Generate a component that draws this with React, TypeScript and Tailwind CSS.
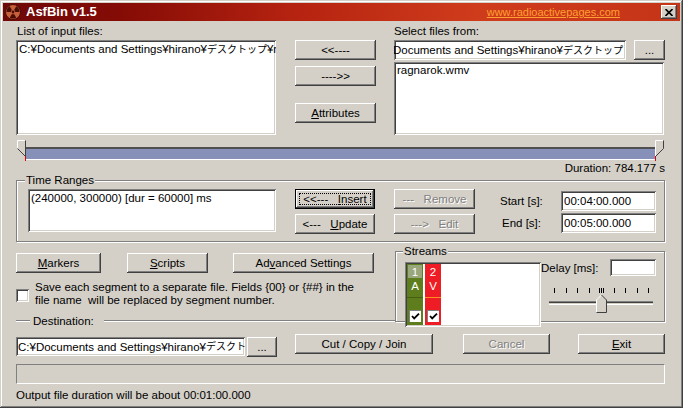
import type { ReactNode } from 'react'

const font = "font-['Liberation_Sans','Noto_Sans_CJK_JP',sans-serif]"
const raised =
  'bg-[#d4d0c8] shadow-[inset_-1px_-1px_#404040,inset_1px_1px_#ffffff,inset_-2px_-2px_#808080,inset_2px_2px_#d4d0c8]'
const sunken =
  'bg-white shadow-[inset_1px_1px_#808080,inset_-1px_-1px_#ffffff,inset_2px_2px_#404040,inset_-2px_-2px_#d4d0c8]'
const etched = 'border border-[#808080] shadow-[inset_1px_1px_#ffffff,1px_1px_#ffffff]'
const disabledText = 'text-[#808080] [text-shadow:1px_1px_0_#ffffff]'

function Btn({
  children,
  className = '',
  disabled = false,
}: {
  children: ReactNode
  className?: string
  disabled?: boolean
}) {
  return (
    <button
      type="button"
      className={`${raised} flex h-[20px] items-center justify-center whitespace-pre ${
        disabled ? disabledText : 'text-black'
      } ${className}`}
    >
      {children}
    </button>
  )
}

function J({ children }: { children: ReactNode }) {
  return <span className="text-[10px]">{children}</span>
}

function CheckMark() {
  return (
    <svg width="9" height="9" viewBox="0 0 9 9">
      <polyline points="1,4 3.2,6.4 8,1.6" fill="none" stroke="#000" strokeWidth="1.8" />
    </svg>
  )
}

function CheckBox({ checked = false, className = '' }: { checked?: boolean; className?: string }) {
  return (
    <div className={`${sunken} flex h-[13px] w-[13px] shrink-0 items-center justify-center ${className}`}>
      {checked && <CheckMark />}
    </div>
  )
}

function RadIcon() {
  return (
    <svg width="16" height="16" viewBox="0 0 16 16">
      <circle cx="8" cy="8" r="7.5" fill="#c8603a" stroke="#4a0e06" />
      <g fill="#4a0e06">
        <path d="M9.1 9.9 L11.25 13.63 A6.5 6.5 0 0 1 4.75 13.63 L6.9 9.9 A2.2 2.2 0 0 0 9.1 9.9 Z" />
        <path d="M5.8 8 L1.5 8 A6.5 6.5 0 0 1 4.75 2.37 L6.9 6.1 A2.2 2.2 0 0 0 5.8 8 Z" />
        <path d="M9.1 6.1 L11.25 2.37 A6.5 6.5 0 0 1 14.5 8 L10.2 8 A2.2 2.2 0 0 0 9.1 6.1 Z" />
        <circle cx="8" cy="8" r="1.4" />
      </g>
    </svg>
  )
}

function TitleBar() {
  return (
    <div className="flex h-[18px] items-center bg-[linear-gradient(90deg,#6e0808_0%,#860c06_18%,#b42210_42%,#cf3c1c_70%,#c63418_100%)] pl-[2px] pr-[3px]">
      <RadIcon />
      <span className="ml-[5px] text-[13px] font-bold leading-[16px] text-white">AsfBin v1.5</span>
      <span className="ml-auto mr-[41px] text-[11px] leading-[14px] text-[#ffa030] underline">
        www.radioactivepages.com
      </span>
      <div className={`${raised} flex h-[14px] w-[16px] items-center justify-center`}>
        <svg width="8" height="7" viewBox="0 0 8 7">
          <path d="M0.5 0 L7.5 7 M7.5 0 L0.5 7" stroke="#000" strokeWidth="1.6" />
        </svg>
      </div>
    </div>
  )
}

function Thumb({ side }: { side: 'left' | 'right' }) {
  if (side === 'left') {
    return (
      <svg width="10" height="21" viewBox="0 0 10 21" className="shrink-0">
        <path d="M1.5 0.5 H9.5 V16.5 L1.5 8.5 Z" fill="#d4d0c8" />
        <path d="M1.5 8.5 V0.5 H9" stroke="#ffffff" fill="none" />
        <path d="M9.5 0.5 V16.5 L1.5 8.5" stroke="#404040" fill="none" />
        <path d="M9.5 16 V21" stroke="#e00000" />
      </svg>
    )
  }
  return (
    <svg width="10" height="21" viewBox="0 0 10 21" className="shrink-0">
      <path d="M0.5 0.5 H8.5 V8.5 L0.5 16.5 Z" fill="#d4d0c8" />
      <path d="M0.5 16.5 V0.5 H8" stroke="#ffffff" fill="none" />
      <path d="M8.5 0.5 V8.5 L0.5 16.5" stroke="#404040" fill="none" />
      <path d="M0.5 16 V21" stroke="#e00000" />
    </svg>
  )
}

function Trackbar() {
  const ticks = [13, 25, 36, 48, 73, 84, 96, 107]
  return (
    <svg width="115" height="40" viewBox="0 0 115 40" shapeRendering="crispEdges">
      {ticks.map((x) => (
        <rect key={x} x={x} y="12" width="1" height="5" fill="#000" />
      ))}
      {[58, 60, 62].map((x) => (
        <rect key={x} x={x} y="12" width="1" height="5" fill="#000" />
      ))}
      <rect x="8" y="25" width="104" height="1" fill="#808080" />
      <rect x="8" y="26" width="104" height="1" fill="#404040" />
      <rect x="8" y="28" width="104" height="1" fill="#ffffff" />
      <path d="M55 37 V24 L60.5 19 L66 24 V37 Z" fill="#d4d0c8" />
      <path d="M55.5 36.5 V24 L60.5 19" stroke="#ffffff" fill="none" shapeRendering="auto" />
      <path d="M60.5 19 L65.5 24 V36.5 H55.5" stroke="#404040" fill="none" shapeRendering="auto" />
    </svg>
  )
}

function StreamColumn({
  num,
  kind,
  color,
  line,
  selected = false,
}: {
  num: string
  kind: string
  color: string
  line: string
  selected?: boolean
}) {
  return (
    <div className={`flex w-[16px] flex-col text-white ${color}`}>
      <div
        className={`mx-[1px] mt-[1px] flex h-[13px] items-center justify-center ${
          selected ? 'bg-[#9aa67c]' : ''
        }`}
      >
        {num}
      </div>
      <div className="flex h-[15px] items-center justify-center">{kind}</div>
      <div className={`mt-[4px] h-[1px] ${line}`} />
      <div className="mt-auto mb-[3px] flex justify-center">
        <div className="flex h-[12px] w-[12px] items-center justify-center bg-white shadow-[inset_1px_1px_#808080,inset_-1px_-1px_#ffffff]">
          <CheckMark />
        </div>
      </div>
    </div>
  )
}

export default function App() {
  return (
    <div
      className={`${font} flex h-[408px] w-[683px] flex-col bg-[#d4d0c8] p-[3px] text-[11.5px] leading-[14px] text-black shadow-[inset_-1px_-1px_#404040,inset_1px_1px_#d4d0c8,inset_-2px_-2px_#808080,inset_2px_2px_#ffffff]`}
    >
      <TitleBar />
      <div className="flex flex-col pl-[13px] pt-[3px]">
        {/* input files */}
        <div className="flex">
          <div className="flex w-[260px] flex-col">
            <div className="h-[16px] pl-[1px]">List of input files:</div>
            <div className={`${sunken} h-[95px] overflow-hidden px-[3px] pt-[2px]`}>
              <div className="whitespace-nowrap">
                C:¥Documents and Settings¥hirano¥<J>デスクトップ</J>¥ragnarok.wmv
              </div>
            </div>
          </div>
          <div className="ml-[19px] flex w-[81px] flex-col pt-[16px]">
            <Btn>{'<<----'}</Btn>
            <Btn className="mt-[6px]">{'---->>'}</Btn>
            <Btn className="mt-[17px]">
              <span className="underline">A</span>ttributes
            </Btn>
          </div>
          <div className="ml-[18px] flex w-[271px] flex-col">
            <div className="h-[16px]">Select files from:</div>
            <div className="flex items-start">
              <div
                className={`${sunken} flex h-[20px] w-[232px] items-center justify-end overflow-hidden whitespace-nowrap px-[3px]`}
              >
                <span className="shrink-0">
                  C:¥Documents and Settings¥hirano¥<J>デスクトップ</J>
                </span>
              </div>
              <Btn className="ml-[8px] h-[19px] w-[31px]">...</Btn>
            </div>
            <div className={`${sunken} mt-[2px] h-[73px] w-[270px] px-[3px] pt-[1px]`}>ragnarok.wmv</div>
          </div>
        </div>

        {/* range slider */}
        <div className="mt-[5px] flex h-[21px] w-[649px]">
          <Thumb side="left" />
          <div className="mt-[7px] h-[13px] flex-1 border-t-2 border-b border-t-[#505050] border-b-white bg-[#8790b8]" />
          <Thumb side="right" />
        </div>
        <div className="h-[14px] w-[649px] text-right">Duration: 784.177 s</div>

        {/* time ranges */}
        <div className={`relative mt-[5px] h-[62px] w-[649px] ${etched}`}>
          <span className="absolute left-[8px] top-[-8px] bg-[#d4d0c8] px-[1px]">Time Ranges</span>
          <div className="flex pl-[11px] pt-[8px]">
            <div className={`${sunken} h-[43px] w-[248px] px-[3px] pt-[2px]`}>
              (240000, 300000) [dur = 60000] ms
            </div>
            <div className="ml-[19px] flex w-[80px] flex-col">
              <button
                type="button"
                className="relative flex h-[20px] items-center justify-center whitespace-pre bg-[#d4d0c8] shadow-[inset_0_0_0_1px_#000000,inset_-2px_-2px_#404040,inset_2px_2px_#ffffff,inset_-3px_-3px_#808080]"
              >
                <span className="absolute inset-[4px] border border-dotted border-black" />
                {'<<---   '}
                <span className="underline">I</span>nsert
              </button>
              <Btn className="mt-[5px]">
                {'<---   '}
                <span className="underline">U</span>pdate
              </Btn>
            </div>
            <div className="ml-[19px] flex w-[81px] flex-col">
              <Btn disabled>{'---   Remove'}</Btn>
              <Btn disabled className="mt-[5px]">
                {'--->   Edit'}
              </Btn>
            </div>
            <div className="ml-[25px] mt-[2px] grid grid-cols-[61px_95px] grid-rows-[20px_20px] gap-y-[2px]">
              <div className="flex items-center">Start [s]:</div>
              <div className={`${sunken} flex items-center px-[3px]`}>00:04:00.000</div>
              <div className="flex items-center pl-[2px]">End [s]:</div>
              <div className={`${sunken} flex items-center px-[3px]`}>00:05:00.000</div>
            </div>
          </div>
        </div>

        {/* options + streams */}
        <div className="flex">
          <div className="flex w-[379px] flex-col pt-[11px]">
            <div className="flex">
              <Btn className="w-[85px]">
                <span className="underline">M</span>arkers
              </Btn>
              <Btn className="ml-[26px] w-[81px]">
                <span className="underline">S</span>cripts
              </Btn>
              <Btn className="ml-[25px] w-[141px]">
                Ad<span className="underline">v</span>anced Settings
              </Btn>
            </div>
            <div className="mt-[8px] flex">
              <CheckBox className="mt-[8px]" />
              <div className="ml-[6px] whitespace-pre leading-[13px]">
                {'Save each segment to a separate file. Fields {00} or {##} in the\nfile name  will be replaced by segment number.'}
              </div>
            </div>
            <div className="mt-[7px] flex h-[14px] items-center">
              <div className="h-[2px] w-[14px] border-t border-b border-t-[#808080] border-b-white" />
              <span className="pl-[3px] pr-[10px]">Destination:</span>
              <div className="h-[2px] flex-1 border-t border-b border-t-[#808080] border-b-white" />
            </div>
          </div>

          <div className={`relative mt-[9px] h-[71px] w-[270px] ${etched}`}>
            <span className="absolute left-[7px] top-[-8px] bg-[#d4d0c8] px-[1px]">Streams</span>
            <div className="flex pl-[9px] pt-[10px]">
              <div className={`${sunken} flex h-[65px] w-[136px] p-[2px]`}>
                <StreamColumn num="1" kind="A" color="bg-[#5e7e1e]" line="bg-[#44600e]" selected />
                <div className="w-[2px]" />
                <StreamColumn num="2" kind="V" color="bg-[#ee1c24]" line="bg-[#ff9020]" />
              </div>
              <div className="flex w-[115px] flex-col">
                <div className="-mt-[3px] flex h-[17px] items-center">
                  <span>Delay [ms]:</span>
                  <div className={`${sunken} ml-auto h-[17px] w-[46px]`} />
                </div>
                <Trackbar />
              </div>
            </div>
          </div>
        </div>

        {/* destination + actions */}
        <div className="mt-[6px] flex items-start">
          <div
            className={`${sunken} mt-[3px] flex h-[19px] w-[229px] items-center overflow-hidden whitespace-nowrap px-[2px]`}
          >
            C:¥Documents and Settings¥hirano¥<J>デスクトップ</J>¥
          </div>
          <Btn className="ml-[2px] mt-[3px] h-[19px] w-[30px]">...</Btn>
          <Btn className="ml-[18px] w-[138px]">Cut / Copy / Join</Btn>
          <Btn disabled className="ml-[30px] w-[87px]">
            Cancel
          </Btn>
          <Btn className="ml-[28px] w-[87px]">
            <span className="underline">E</span>xit
          </Btn>
        </div>

        <div className="mt-[7px] h-[20px] w-[649px] border border-t-[#808080] border-l-[#808080] border-b-white border-r-white" />
        <div className="mt-[4px] h-[14px]">Output file duration will be about 00:01:00.000</div>
      </div>
    </div>
  )
}
